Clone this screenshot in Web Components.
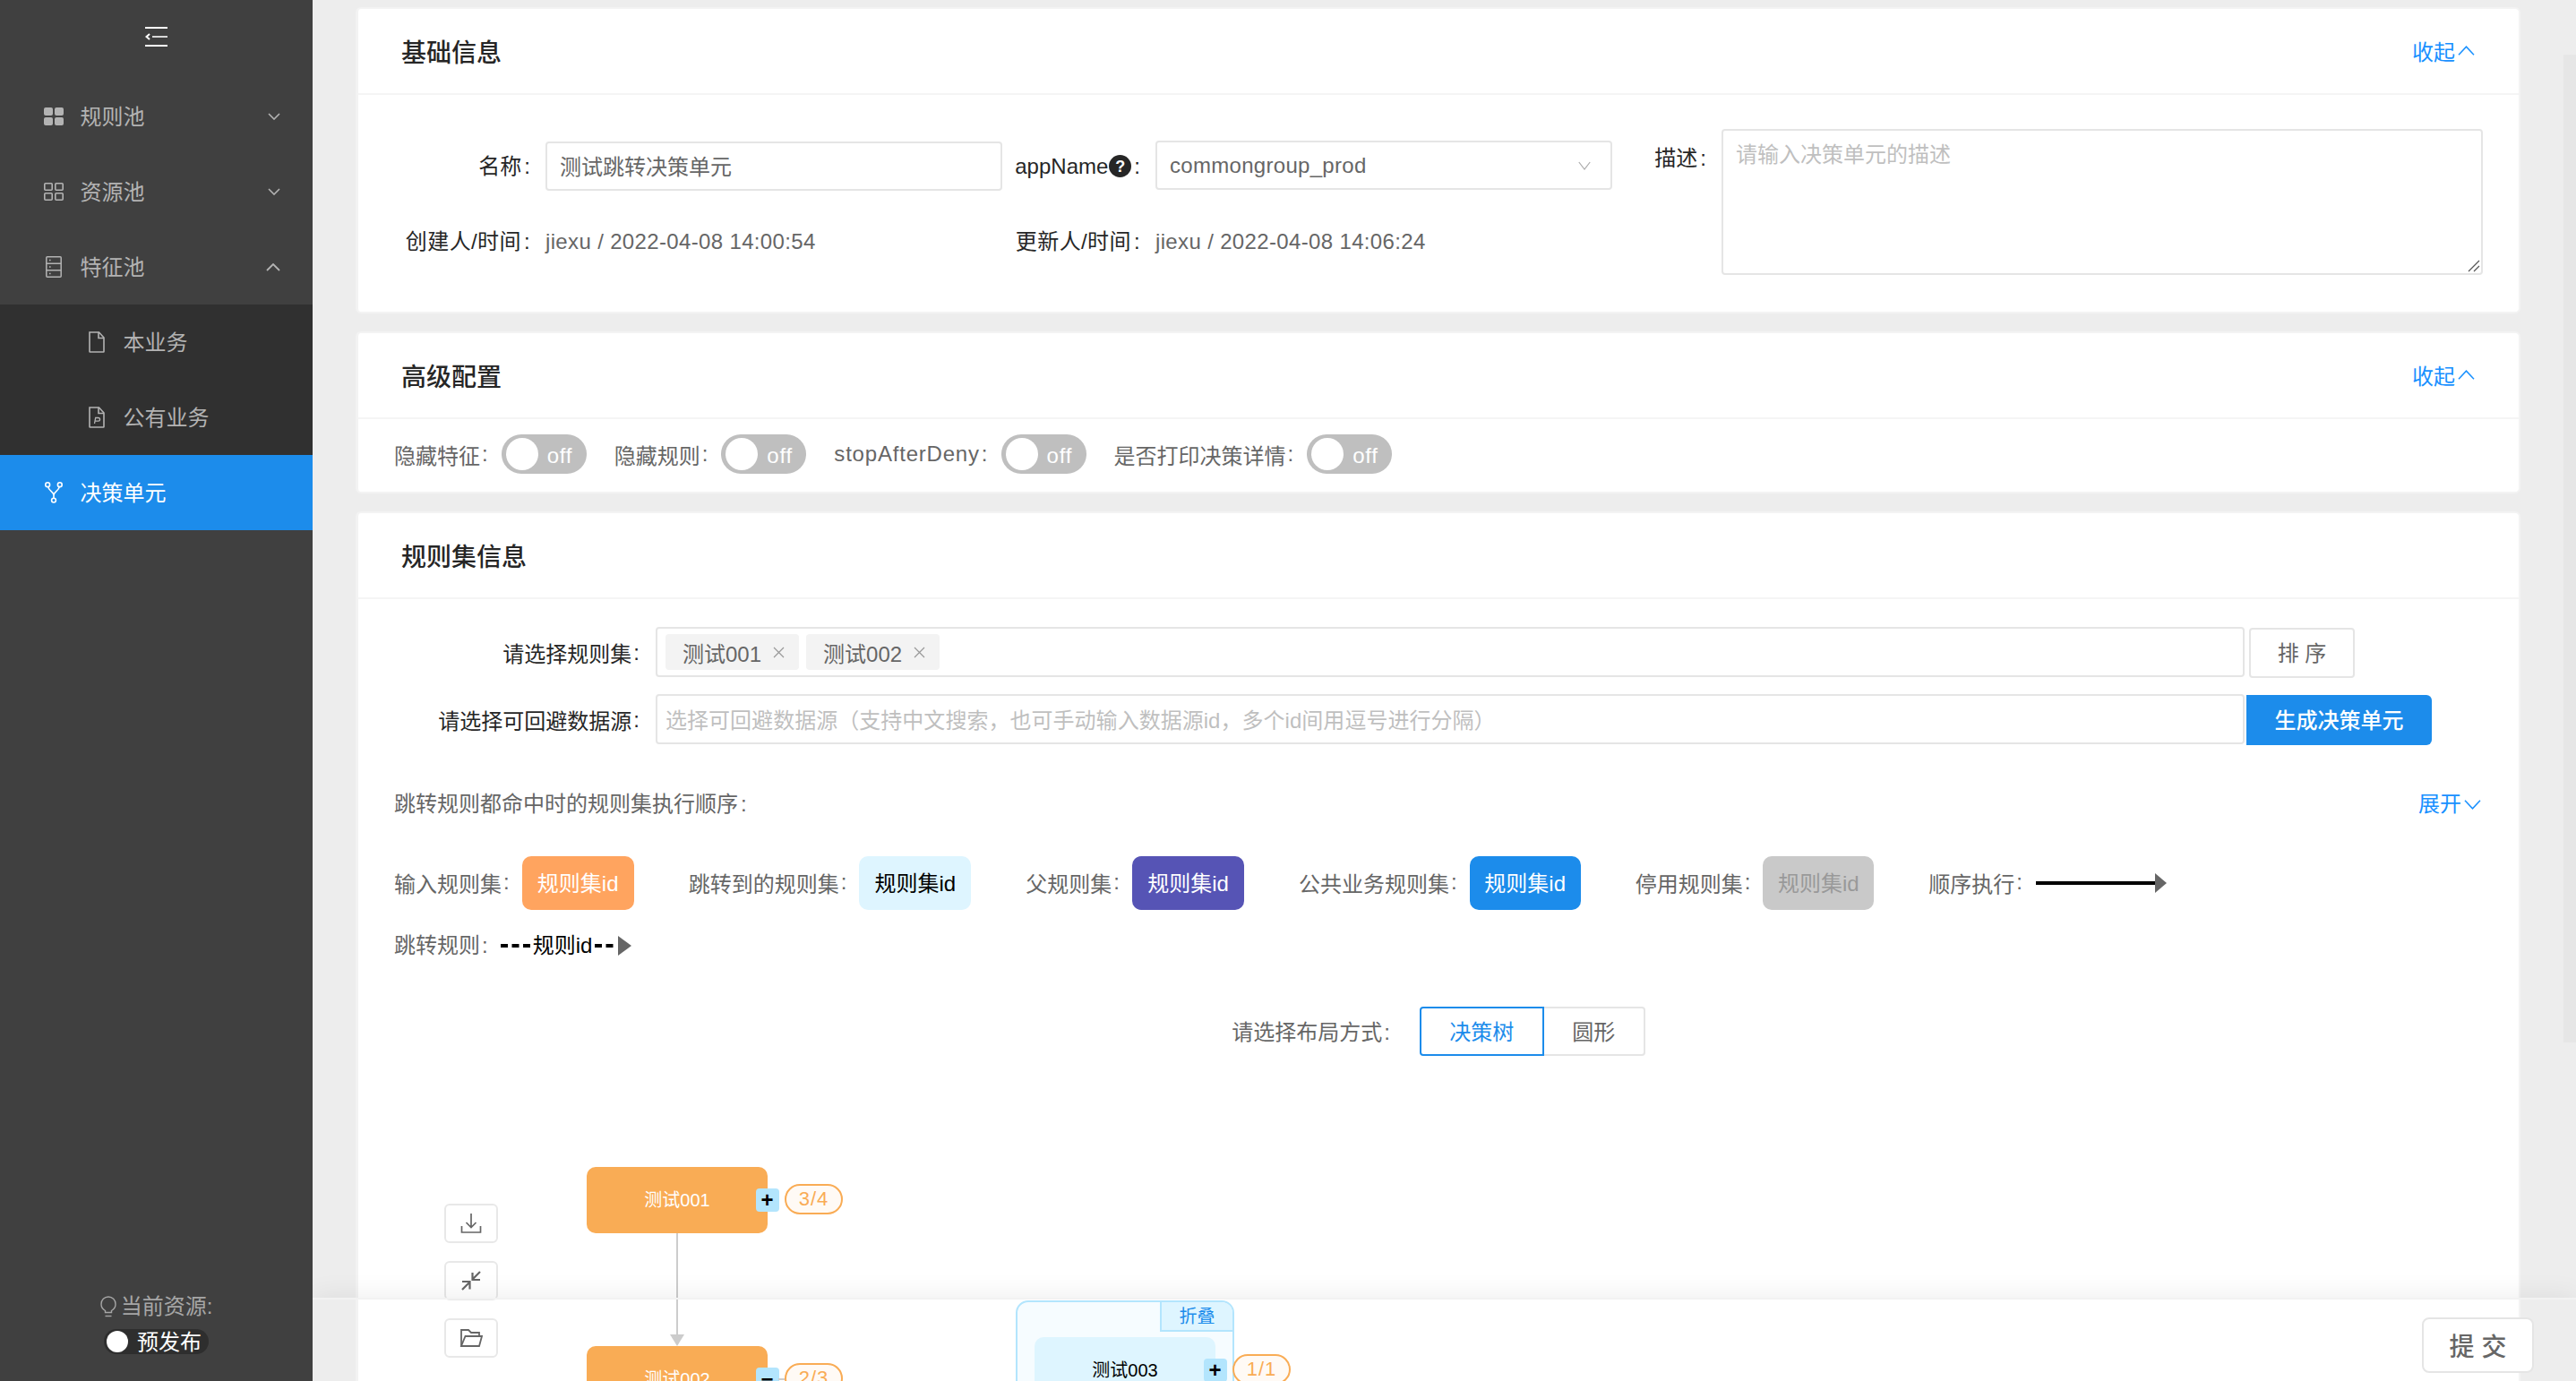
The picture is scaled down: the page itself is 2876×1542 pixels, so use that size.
<!DOCTYPE html>
<html lang="zh">
<head>
<meta charset="utf-8">
<title>决策单元</title>
<style>
html,body{margin:0;padding:0;height:100%;overflow:hidden;background:#ededed;font-family:"Liberation Sans","Noto Sans CJK SC",sans-serif;font-size:24px;color:#666}
</style>
</head>
<body>
<app-shell>
  <side-bar slot="side">
    <nav-item icon="grid" chev="down">规则池</nav-item>
    <nav-item icon="gridline" chev="down">资源池</nav-item>
    <nav-item icon="rows" chev="up">特征池</nav-item>
    <nav-item sub icon="file">本业务</nav-item>
    <nav-item sub icon="filep">公有业务</nav-item>
    <nav-item active icon="branch">决策单元</nav-item>
  </side-bar>
  <main-pane slot="main">
    <info-card heading="基础信息" collapse>
      <form-grid>
        <field-label>名称</field-label>
        <text-box>测试跳转决策单元</text-box>
        <field-label><span>appName</span><help-dot></help-dot></field-label>
        <text-box chevron>commongroup_prod</text-box>
        <field-label top>描述</field-label>
        <text-area placeholder="请输入决策单元的描述"></text-area>
        <field-label spaced>创建人/时间</field-label>
        <plain-value>jiexu / 2022-04-08 14:00:54</plain-value>
        <field-label spaced>更新人/时间</field-label>
        <plain-value>jiexu / 2022-04-08 14:06:24</plain-value>
      </form-grid>
    </info-card>
    <info-card heading="高级配置" collapse>
      <switch-row>
        <switch-item label="隐藏特征"></switch-item>
        <switch-item label="隐藏规则"></switch-item>
        <switch-item label="stopAfterDeny"></switch-item>
        <switch-item label="是否打印决策详情"></switch-item>
      </switch-row>
    </info-card>
    <info-card heading="规则集信息">
      <rule-panel>
        <input-row label="请选择规则集">
          <tag-box>
            <rule-tag>测试001</rule-tag>
            <rule-tag>测试002</rule-tag>
          </tag-box>
          <plain-button slot="action">排 序</plain-button>
        </input-row>
        <input-row label="请选择可回避数据源" tight>
          <tag-box placeholder>选择可回避数据源（支持中文搜索，也可手动输入数据源id，多个id间用逗号进行分隔）</tag-box>
          <primary-button slot="action">生成决策单元</primary-button>
        </input-row>
        <order-line>跳转规则都命中时的规则集执行顺序</order-line>
        <legend-row>
          <legend-item label="输入规则集" bg="#ffa45f" fg="#fff">规则集id</legend-item>
          <legend-item label="跳转到的规则集" bg="#def5ff" fg="#000">规则集id</legend-item>
          <legend-item label="父规则集" bg="#5654b5" fg="#fff">规则集id</legend-item>
          <legend-item label="公共业务规则集" bg="#1c8ceb" fg="#fff" narrow>规则集id</legend-item>
          <legend-item label="停用规则集" bg="#c9c9c9" fg="#999" narrow>规则集id</legend-item>
          <seq-arrow label="顺序执行"></seq-arrow>
        </legend-row>
        <jump-legend label="跳转规则">规则id</jump-legend>
        <layout-choice></layout-choice>
        <flow-graph>
          <tool-stack>
            <tool-button icon="download"></tool-button>
            <tool-button icon="compress"></tool-button>
            <tool-button icon="folder"></tool-button>
          </tool-stack>
          <flow-edge></flow-edge>
          <flow-group x="734" y="273"></flow-group>
          <flow-node x="255" y="124" count="3/4" mark="+">测试001</flow-node>
          <flow-node x="255" y="324" count="2/3" mark="−" dash>测试002</flow-node>
          <flow-node x="755" y="314" count="1/1" mark="+" light>测试003</flow-node>
        </flow-graph>
      </rule-panel>
    </info-card>
    <scroll-thumb></scroll-thumb>
    <foot-bar><plain-button big>提 交</plain-button></foot-bar>
  </main-pane>
</app-shell>

<script>
const ICONS = {
  menu:'<svg width="25" height="22" viewBox="0 0 25 22" fill="none" stroke="#fff"><path d="M0 1h25M0 21h25" stroke-width="2"/><path d="M8 11h17" stroke-width="1.6"/><path d="M5 8l-3.5 3L5 14" stroke-width="2"/></svg>',
  grid:'<svg width="22" height="20" viewBox="0 0 22 20" fill="currentColor"><rect width="10" height="9" rx="2"/><rect x="12" width="10" height="9" rx="2"/><rect y="11" width="10" height="9" rx="2"/><rect x="12" y="11" width="10" height="9" rx="2"/></svg>',
  gridline:'<svg width="22" height="20" viewBox="0 0 22 20" fill="none" stroke="currentColor" stroke-width="1.6"><rect x=".8" y=".8" width="8.4" height="7.4" rx="1"/><rect x="12.8" y=".8" width="8.4" height="7.4" rx="1"/><rect x=".8" y="11.8" width="8.4" height="7.4" rx="1"/><rect x="12.8" y="11.8" width="8.4" height="7.4" rx="1"/></svg>',
  rows:'<svg width="22" height="24" viewBox="0 0 22 24" fill="none" stroke="currentColor" stroke-width="1.5"><rect x="2.8" y=".8" width="16.4" height="22.4" rx="1"/><path d="M3 8.3h16M3 15.7h16"/><path d="M6 4.5h1.6M6 12h1.6M6 19.5h1.6" stroke-width="1.4"/></svg>',
  file:'<svg width="18" height="24" viewBox="0 0 18 24" fill="none" stroke="currentColor" stroke-width="1.6"><path d="M1 1h10.5L17 7v15.5a.5.5 0 0 1-.5.5H1.5a.5.5 0 0 1-.5-.5z"/><path d="M11 1v6.5h6"/></svg>',
  filep:'<svg width="18" height="24" viewBox="0 0 18 24" fill="none" stroke="currentColor" stroke-width="1.6"><path d="M1 1h10.5L17 7v15.5a.5.5 0 0 1-.5.5H1.5a.5.5 0 0 1-.5-.5z"/><path d="M11 1v6.5h6"/><path d="M6.5 19l1.2-6.5h3a1.8 1.8 0 0 1 0 3.700H7.200" stroke-width="1.3"/></svg>',
  branch:'<svg width="20" height="24" viewBox="0 0 20 24" fill="none" stroke="#fff" stroke-width="1.6"><circle cx="3.2" cy="3.2" r="2.4"/><circle cx="16.8" cy="3.2" r="2.4"/><circle cx="10" cy="20.6" r="2.4"/><path d="M3.8 5.700C4.500 10.500 10 11 10 15v3.200M16.200 5.700C15.500 10.500 10 11 10 15"/></svg>',
  bulb:'<svg width="18" height="24" viewBox="0 0 18 24" fill="none" stroke="currentColor" stroke-width="1.4"><path d="M5.5 16.500C3 15 1 12.500 1 9.200 1 4.500 4.500 1 9 1s8 3.500 8 8.200c0 3.300-2 5.800-4.500 7.300v2h-7z"/><path d="M5.500 22.500h7"/></svg>',
  up:'<svg width="16" height="9" viewBox="0 0 16 9" fill="none" stroke="currentColor" stroke-width="1.8"><path d="M1 8l7-7 7 7"/></svg>',
  down:'<svg width="14" height="8" viewBox="0 0 14 8" fill="none" stroke="currentColor" stroke-width="1.6"><path d="M1 1l6 6 6-6"/></svg>',
  thinup:'<svg width="19" height="11" viewBox="0 0 19 11" fill="none" stroke="currentColor" stroke-width="1.5"><path d="M1 10.200l8.500-9 8.500 9"/></svg>',
  thindown:'<svg width="19" height="11" viewBox="0 0 19 11" fill="none" stroke="currentColor" stroke-width="1.5"><path d="M1 .8l8.500 9 8.500-9"/></svg>',
  selectdown:'<svg width="14" height="10" viewBox="0 0 14 10" fill="none" stroke="currentColor" stroke-width="1.2"><path d="M.8 1l6.200 8 6.200-8"/></svg>',
  download:'<svg width="24" height="24" viewBox="0 0 24 24" fill="none" stroke="#666" stroke-width="1.7"><path d="M12 1v15M6.500 11l5.500 5.500L17.500 11"/><path d="M1.500 15v7h21v-7"/></svg>',
  compress:'<svg width="24" height="24" viewBox="0 0 24 24" fill="none" stroke="#666" stroke-width="2.2"><path d="M22 2l-9 9M13.500 3v8h8.500"/><path d="M2 22l8-8M2 13h8.500v8.500"/></svg>',
  folder:'<svg width="26" height="22" viewBox="0 0 26 22" fill="none" stroke="#666" stroke-width="1.8"><path d="M2 20V2h8l3 3h9v4"/><path d="M2 20h20l3-11H6.500z"/></svg>'
};
const colon = (r,l=2) => `<span style="margin:0 ${r}px 0 ${l}px">:</span>`;
function define(name, render){
  customElements.define(name, class extends HTMLElement{
    connectedCallback(){
      if(this.shadowRoot) return;
      this.attachShadow({mode:'open'}).innerHTML = render(this);
    }
  });
}
define('app-shell',()=>`<style>:host{display:grid;grid-template-columns:349px 1fr;height:1542px;width:2876px;overflow:hidden}</style><slot name="side"></slot><slot name="main"></slot>`);
define('side-bar',()=>`<style>
:host{display:flex;flex-direction:column;background:#404040;color:#b3b3b3;height:1542px}
.top{height:88px;display:flex;align-items:center;justify-content:center;box-sizing:border-box;padding-bottom:6px}
.res{margin-top:auto;padding-bottom:30px;display:flex;flex-direction:column;align-items:center}
.cur{display:flex;align-items:center;gap:5px;height:36px;line-height:36px;color:#a6a6a6;margin-bottom:6px;position:relative;top:-1px}
.cur svg{display:block}
.sw{height:28px;width:117px;box-sizing:border-box;background:#2e2e2e;border-radius:14px;display:flex;align-items:center;color:#fff;padding-left:3px;gap:10px}
.sw span+span{margin-top:-3px}
.k{width:24px;height:24px;border-radius:50%;background:#fff}
</style>
<div class="top">${ICONS.menu}</div>
<slot></slot>
<div class="res"><div class="cur">${ICONS.bulb}<span>当前资源:</span></div><div class="sw"><span class="k"></span><span>预发布</span></div></div>`);
define('nav-item',(h)=>{
  const sub=h.hasAttribute('sub'),act=h.hasAttribute('active');
  const chev=h.getAttribute('chev');
  return `<style>
:host{display:flex;align-items:center;height:84px;box-sizing:border-box;padding-left:${sub?99:49}px;background:${act?'#1c8ceb':sub?'#303030':'transparent'};color:${act?'#fff':'#b3b3b3'}}
.i{width:${sub?18:22}px;display:flex;justify-content:${sub?'flex-start':'center'};margin-right:${sub?20.5:18.5}px}
.i svg{display:block}
.t{margin-top:-3px}
.c{margin-left:auto;margin-right:36px;display:flex}
</style><span class="i">${ICONS[h.getAttribute('icon')]}</span><span class="t"><slot></slot></span>${chev?`<span class="c">${ICONS[chev]}</span>`:''}`;
});
define('main-pane',()=>`<style>
:host{display:flex;flex-direction:column;gap:20px;position:relative;overflow:hidden;background:#ededed;padding:8px 62px 0 48px;height:1542px;box-sizing:border-box}
</style><slot></slot>`);
define('info-card',(h)=>`<style>
:host{display:block;flex:none;background:#fff;border:2px solid #f3f3f3;border-left-width:3px;border-radius:6px}
.hd{height:94px;display:flex;align-items:center;justify-content:space-between;padding:0 49px 0 48px;border-bottom:2px solid #f5f5f5}
h2{margin:5px 0 0;font-size:28px;line-height:40px;font-weight:500;color:#262626}
.col{display:flex;align-items:center;gap:3px;color:#1890ff;margin-top:-2px}
.col svg{display:block}
</style><div class="hd"><h2>${h.getAttribute('heading')}</h2>${h.hasAttribute('collapse')?`<span class="col">收起${ICONS.thinup}</span>`:''}</div><slot></slot>`);
define('form-grid',()=>`<style>
:host{display:grid;grid-template-columns:209px 510px 171px 510px 122px 850px;grid-template-rows:55px 55px;row-gap:29px;padding:52px 0 51px;align-items:center}
</style><slot></slot>`);
define('field-label',(h)=>`<style>
:host{display:flex;justify-content:flex-end;align-items:center;color:#262626;line-height:36px;${h.hasAttribute('spaced')?'letter-spacing:.4px;':''}${h.hasAttribute('top')?'align-self:start;margin-top:1px;':''}white-space:nowrap}
</style><slot></slot>${colon(17,3)}`);
define('help-dot',()=>`<style>:host{display:inline-flex;width:25px;height:25px;border-radius:50%;background:#262626;color:#fff;font-size:18px;font-weight:700;align-items:center;justify-content:center;margin-left:1px}</style>?`);
define('text-box',(h)=>{
  const c=h.hasAttribute('chevron');
  return `<style>
:host{display:flex;align-items:center;justify-content:space-between;box-sizing:border-box;height:55px;border:2px solid #e5e5e5;border-radius:4px;padding:${c?1:0}px 14px ${c?0:3}px;color:#666;background:#fff;${c?'letter-spacing:.3px;margin-top:-2px;':''}}
svg{display:block;color:#aaa;margin-right:8px}
</style><slot></slot>${c?ICONS.selectdown:''}`;
});
define('plain-value',()=>`<style>:host{display:block;color:#666;letter-spacing:.35px;line-height:36px}</style><slot></slot>`);
define('text-area',(h)=>`<style>
:host{display:block;position:relative;grid-column:6;grid-row:1 / span 2;align-self:start;margin-top:-14px;height:163px;box-sizing:border-box;border:2px solid #e5e5e5;border-radius:4px;padding:9px 14px;color:#bfbfbf;line-height:36px}
svg{position:absolute;right:1px;bottom:1px}
</style>${h.getAttribute('placeholder')}<svg width="14" height="14" viewBox="0 0 14 14" stroke="#555" stroke-width="1.2"><path d="M1 13L13 1M7 13l6-6"/></svg>`);
define('switch-row',()=>`<style>:host{display:flex;gap:31px;padding:17px 40px 20px;align-items:center}</style><slot></slot>`);
define('switch-item',(h)=>{
  const l=h.getAttribute('label');
  const latin=/^[a-z]/i.test(l);
  return `<style>
:host{display:flex;align-items:center;color:#666;white-space:nowrap}
.l{${latin?'letter-spacing:.8px;':''}}
.s{width:95px;height:44px;border-radius:22px;background:#bfbfbf;display:flex;align-items:center;padding-left:5px;box-sizing:border-box;color:#fff;gap:10px;letter-spacing:.8px}
.s span+span{margin-top:4px}
.k{width:36px;height:36px;border-radius:50%;background:#fff}
</style><span class="l">${l}</span>${colon(15)}<span class="s"><span class="k"></span><span>off</span></span>`;
});
define('rule-panel',()=>`<style>:host{display:block;padding-top:31px}</style><slot></slot>`);
define('input-row',(h)=>`<style>
:host{display:flex;margin-bottom:18px}
.l{width:332px;flex:none;display:flex;justify-content:flex-end;align-items:center;color:#262626;white-space:nowrap}
.b{width:1774px;flex:none}
.a{flex:none;margin-left:${h.hasAttribute('tight')?2:5}px;margin-top:1px}
</style><span class="l">${h.getAttribute('label')}${colon(18)}</span><div class="b"><slot></slot></div><div class="a"><slot name="action"></slot></div>`);
define('tag-box',(h)=>`<style>
:host{display:flex;align-items:center;gap:8px;height:56px;box-sizing:border-box;border:2px solid #e5e5e5;border-radius:4px;padding-left:9px;${h.hasAttribute('placeholder')?'color:#bfbfbf;padding-bottom:2px;letter-spacing:.03px;':''}}
</style><slot></slot>`);
define('rule-tag',()=>`<style>
:host{display:flex;align-items:center;height:40px;background:#f3f3f3;border-radius:4px;padding:0 16px 0 19px;color:#666}
svg{margin-left:13px;display:block}
</style><slot></slot><svg width="13" height="13" viewBox="0 0 13 13" stroke="#999" stroke-width="1.2"><path d="M1 1l11 11M12 1L1 12"/></svg>`);
define('plain-button',(h)=>{
  const big=h.hasAttribute('big');
  return `<style>
:host{display:flex;align-items:center;justify-content:center;box-sizing:border-box;background:#fff;border:2px solid #e5e5e5;border-radius:${big?8:4}px;width:${big?125:118}px;height:${big?62:56}px;color:#666;${big?'font-size:28px;font-weight:500;':'padding-bottom:3px;'}}
</style><slot></slot>`;
});
define('primary-button',()=>`<style>
:host{display:flex;align-items:center;justify-content:center;width:207px;height:56px;box-sizing:border-box;padding-bottom:3px;background:#1c8ceb;color:#fff;border-radius:0 6px 6px 0;font-weight:500}
</style><slot></slot>`);
define('order-line',()=>`<style>
:host{display:flex;justify-content:space-between;align-items:center;line-height:36px;padding:0 42px 0 40px;margin-top:48px;color:#666}
.o{color:#1890ff;display:flex;align-items:center;gap:3px}
svg{display:block}
</style><span><slot></slot><span style="margin-left:3px">:</span></span><span class="o">展开${ICONS.thindown}</span>`);
define('legend-row',()=>`<style>:host{display:flex;align-items:center;margin-top:40px;padding-left:40px;gap:61px}</style><slot></slot>`);
define('legend-item',(h)=>`<style>
:host{display:flex;align-items:center;white-space:nowrap;color:#666}
.x{display:flex;align-items:center;margin-top:-2px}
.c{display:flex;align-items:center;justify-content:center;box-sizing:border-box;padding-bottom:3px;height:60px;width:${h.hasAttribute('narrow')?124:125}px;border-radius:10px;background:${h.getAttribute('bg')};color:${h.getAttribute('fg')}}
</style><span class="x"><span>${h.getAttribute('label')}</span>${colon(14)}</span><span class="c"><slot></slot></span>`);
define('seq-arrow',(h)=>`<style>
:host{display:flex;align-items:center;white-space:nowrap;color:#666}
.x{display:flex;align-items:center;margin-top:-2px}
svg{display:block}
</style><span class="x"><span>${h.getAttribute('label')}</span>${colon(15)}</span><svg width="146" height="22" viewBox="0 0 146 22"><rect y="9" width="134" height="4" fill="#000"/><path d="M133 0l13 11-13 11z" fill="#666"/></svg>`);
define('jump-legend',(h)=>`<style>
:host{display:flex;align-items:center;line-height:36px;margin-top:22px;padding-left:40px;color:#666;white-space:nowrap}
.t{color:#000;margin:0 3px}
svg{display:block}
</style><span>${h.getAttribute('label')}</span>${colon(14)}<svg width="33" height="4"><path d="M0 2h33" stroke="#000" stroke-width="4" stroke-dasharray="8 4.5"/></svg><span class="t"><slot></slot></span><svg width="41" height="22" viewBox="0 0 41 22"><path d="M0 11h21" stroke="#000" stroke-width="4" stroke-dasharray="8 4.5"/><path d="M26 0l15 11-15 11z" fill="#666"/></svg>`);
define('layout-choice',()=>`<style>
:host{display:flex;align-items:center;justify-content:center;margin-top:50px;color:#666;white-space:nowrap}
.r{display:flex;height:55px;box-sizing:border-box}
.a,.b{display:flex;align-items:center;justify-content:center;box-sizing:border-box;padding-bottom:3px}
.a{width:139px;border:2px solid #1c8ceb;color:#1c8ceb;border-radius:4px 0 0 4px}
.b{width:113px;border:2px solid #e5e5e5;border-left:0;border-radius:0 4px 4px 0}
</style><span style="margin-top:-2px">请选择布局方式${colon(33)}</span><div class="r"><span class="a">决策树</span><span class="b">圆形</span></div>`);
define('flow-graph',()=>`<style>:host{display:block;position:relative;height:700px}</style><slot></slot>`);
define('tool-stack',()=>`<style>:host{position:absolute;left:96px;top:165px;display:flex;flex-direction:column;gap:20px}</style><slot></slot>`);
define('tool-button',(h)=>`<style>
:host{display:flex;align-items:center;justify-content:center;width:60px;height:44px;box-sizing:border-box;background:#fff;border:2px solid #e8e8e8;border-radius:6px}
svg{display:block}
</style>${ICONS[h.getAttribute('icon')]}`);
define('flow-edge',()=>`<style>:host{position:absolute;left:348px;top:198px}svg{display:block}</style><svg width="16" height="126" viewBox="0 0 16 126"><path d="M8 0v114" stroke="#ccc" stroke-width="2"/><path d="M0 113h16l-8 13z" fill="#ccc"/></svg>`);
define('flow-group',(h)=>`<style>
:host{position:absolute;left:${h.getAttribute('x')}px;top:${h.getAttribute('y')}px;width:244px;height:300px;box-sizing:border-box;border:2px solid #b3e5fd;border-radius:14px;background:#f6fcff}
.t{position:absolute;right:0;top:0;width:81px;height:33px;box-sizing:border-box;padding-bottom:2px;background:#def5ff;border:solid #b3e5fd;border-width:0 0 2px 2px;border-radius:0 12px 0 0;color:#1c8ceb;font-size:20px;display:flex;align-items:center;justify-content:center}
</style><div class="t">折叠</div>`);
define('flow-node',(h)=>{
  const light=h.hasAttribute('light');
  return `<style>
:host{position:absolute;left:${h.getAttribute('x')}px;top:${h.getAttribute('y')}px;width:202px;height:74px;box-sizing:border-box;padding-bottom:3px;border-radius:10px;background:${light?'#def5ff':'#f9ac55'};color:${light?'#000':'#fff'};font-size:20px;display:flex;align-items:center;justify-content:center}
.m{position:absolute;left:188.5px;top:24px;width:26px;height:26px;border-radius:4px;background:#b3e5fd;color:#000;display:flex;align-items:center;justify-content:center;font-size:24px;font-weight:700;line-height:26px}
.p{position:absolute;left:221px;top:19px;width:65px;height:34px;box-sizing:border-box;border:2px solid #f9ac55;border-radius:17px;background:#fffaf5;color:#f9ac55;display:flex;align-items:center;justify-content:center;font-size:22px;letter-spacing:1px}
.d{position:absolute;left:214px;top:36px;width:7px;height:2px;background:#ccc}
</style><slot></slot><span class="m">${h.getAttribute('mark')}</span>${h.hasAttribute('dash')?'<span class="d"></span>':''}<span class="p">${h.getAttribute('count')}</span>`;
});
define('scroll-thumb',()=>`<style>:host{position:absolute;right:0;top:61px;width:14px;height:1103px;background:#e6e6e6}</style>`);
define('foot-bar',()=>`<style>
:host{position:absolute;left:0;right:0;bottom:0;height:93px;box-sizing:border-box;border-top:2px solid #f2f2f2;box-shadow:0 -2px 28px rgba(0,0,0,.07);display:flex;justify-content:flex-end;padding:20px 47px 0 0}
</style><slot></slot>`);
</script>
</body>
</html>
